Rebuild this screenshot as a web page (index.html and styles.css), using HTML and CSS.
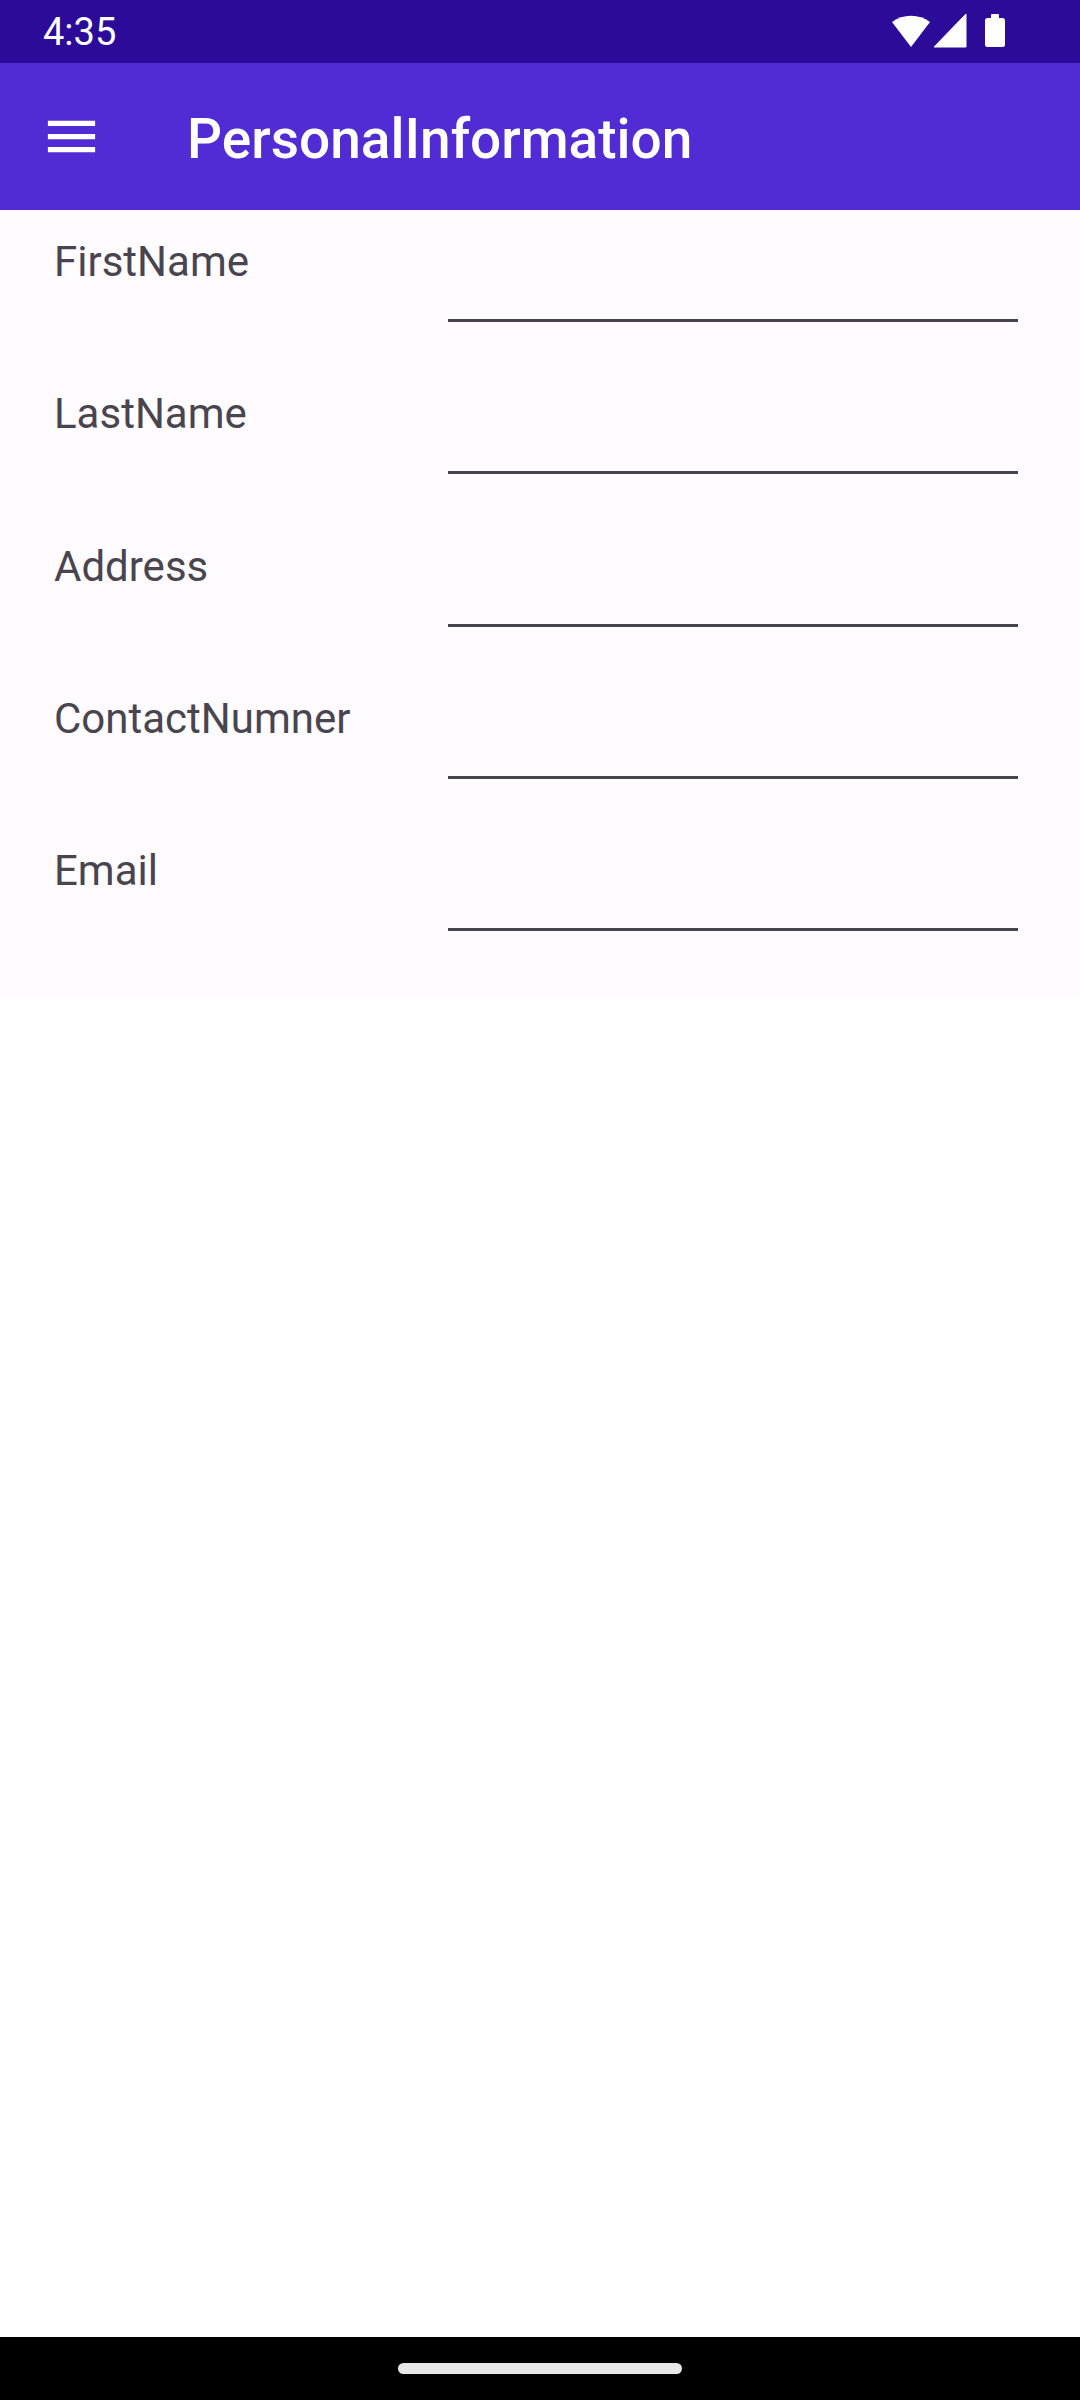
FILE: index.html
```html
<!DOCTYPE html>
<html lang="en">
<head>
<meta charset="utf-8">
<title>PersonalInformation</title>
<link rel="stylesheet" href="styles.css">
</head>
<body>
<div class="screen">
  <div class="statusbar">
    <span class="clock">4:35</span>
    <svg class="status-icons" width="130" height="63" viewBox="0 0 130 63">
      <path d="M26 47 L7 22 A32 32 0 0 1 45 22 Z" fill="#fff"/>
      <path d="M49 47 L81 47 L81 14 Z" fill="#fff" stroke="#fff" stroke-width="1" stroke-linejoin="round"/>
      <rect x="106" y="14" width="8" height="6" rx="1" fill="#fff"/>
      <rect x="100" y="18" width="20" height="29" rx="2.5" fill="#fff"/>
    </svg>
  </div>
  <header class="appbar">
    <svg class="menu-icon" width="63" height="63" viewBox="0 0 24 24">
      <path d="M3 18h18v-2H3v2zm0-5h18v-2H3v2zm0-7v2h18V6H3z" fill="#fff"/>
    </svg>
    <h1 class="title">PersonalInformation</h1>
  </header>
  <main class="form">
    <div class="row"><span class="label">FirstName</span><div class="entry"></div></div>
    <div class="row"><span class="label">LastName</span><div class="entry"></div></div>
    <div class="row"><span class="label">Address</span><div class="entry"></div></div>
    <div class="row"><span class="label">ContactNumner</span><div class="entry"></div></div>
    <div class="row"><span class="label">Email</span><div class="entry"></div></div>
  </main>
  <div class="spacer"></div>
  <div class="navbar"><div class="handle"></div></div>
</div>
</body>
</html>
```

FILE: styles.css
```css
* { box-sizing: border-box; }
html, body { margin: 0; padding: 0; background: #ffffff; }
body { font-family: Roboto, "Noto Sans", sans-serif; }

.screen {
  width: 1080px;
  height: 2400px;
  display: flex;
  flex-direction: column;
}

.statusbar {
  height: 63px;
  flex: 0 0 63px;
  background: #2b0b98;
  display: flex;
  align-items: center;
  justify-content: space-between;
  padding: 0 65px 0 43px;
}
.clock {
  color: #ffffff;
  font-size: 38px;
  line-height: normal;
}
.status-icons { display: block; }

.appbar {
  height: 147px;
  flex: 0 0 147px;
  background: #512bd4;
  display: flex;
  align-items: center;
  padding-left: 40px;
}
.menu-icon { display: block; }
.title {
  margin: 0 0 0 84px;
  padding-top: 4px;
  color: #ffffff;
  font-size: 55px;
  font-weight: 500;
  line-height: normal;
}

.form {
  background: #fffbfe;
  padding-bottom: 26px;
  display: flex;
  flex-direction: column;
}
.row {
  height: 152.25px;
  display: grid;
  grid-template-columns: 448px 570px;
  align-items: start;
}
.label {
  padding: 27px 0 0 54px;
  font-size: 42px;
  line-height: normal;
  color: #49454f;
}
.entry {
  height: 112px;
  border-bottom: 3px solid #49454f;
}

.spacer { flex: 1 1 auto; background: #ffffff; }

.navbar {
  flex: 0 0 63px;
  height: 63px;
  background: #000000;
  display: flex;
  justify-content: center;
  padding-top: 26px;
}
.handle {
  width: 284px;
  height: 11px;
  border-radius: 6px;
  background: #e8e8e8;
}
```
